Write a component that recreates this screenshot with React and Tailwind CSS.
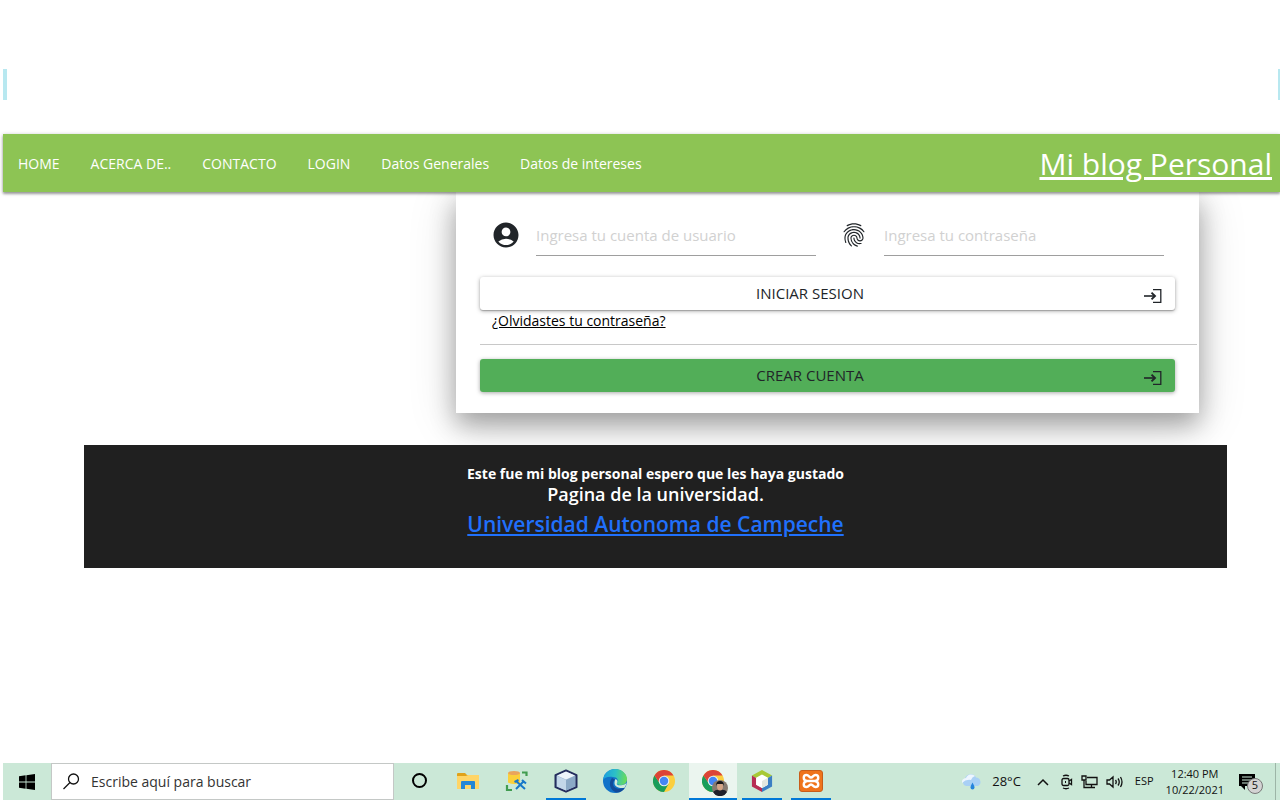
import { MdAccountCircle, MdFingerprint } from "react-icons/md";

const navLinks = [
  "HOME",
  "ACERCA DE..",
  "CONTACTO",
  "LOGIN",
  "Datos Generales",
  "Datos de intereses",
];

function EnterIcon() {
  return (
    <svg viewBox="0 0 18 14" className="mt-[5px] h-[14px] w-[18px]" fill="none" stroke="currentColor" aria-hidden="true">
      <path d="M9 0.7h7.8v12.6H9" strokeWidth="1.3" />
      <path d="M0 7h11" strokeWidth="1.6" />
      <path d="M7.5 3.6L11 7l-3.5 3.4" strokeWidth="1.9" />
    </svg>
  );
}

function Field({ id, label, type, icon }) {
  return (
    <div className="flex flex-1 items-center gap-4">
      <label htmlFor={id} aria-label={label} className="flex w-7 justify-center text-[#212529]">
        {icon}
      </label>
      <input
        id={id}
        type={type}
        placeholder={label}
        className="h-[42px] min-w-0 flex-1 border-b border-[#9e9e9e] bg-transparent text-[15px] outline-none placeholder:text-[#d1d1d1]"
      />
    </div>
  );
}

function WindowsLogo() {
  return (
    <svg viewBox="0 0 16 16" className="h-4 w-4" aria-hidden="true">
      <path d="M0 2.2L6.6 1.3v6.2H0zM7.4 1.2L16 0v7.5H7.4zM0 8.4h6.6v6.3L0 13.8zM7.4 8.4H16V16l-8.6-1.2z" />
    </svg>
  );
}

function FolderIcon() {
  return (
    <svg viewBox="0 0 22 18" className="h-[18px] w-[22px]" aria-hidden="true">
      <path d="M0 2q0-1 1-1h7l2 2h10q1 0 1 1v3H0z" fill="#e0a21a" />
      <path d="M0 4h9l2-1h11v14H0z" fill="#ffd567" />
      <path d="M4 17v-7q0-1 1-1h12q1 0 1 1v7h-4v-4H8v4z" fill="#2486d6" />
    </svg>
  );
}

function DatabaseIcon() {
  return (
    <svg viewBox="0 0 24 22" className="h-[22px] w-6" aria-hidden="true">
      <path d="M3 3v9.500q6 3 12 0V3z" fill="#fbd03b" />
      <ellipse cx="9" cy="3" rx="6" ry="2" fill="#eaa45c" />
      <path d="M17 2.500h4.500V6M2 15v5h5" fill="none" stroke="#419c50" strokeWidth="2.200" />
      <path d="M11 11l9 8M19 11l-8 8M9.500 12l4-2M17 10l4 3.500" stroke="#1877c9" strokeWidth="2" />
    </svg>
  );
}

function CubeIcon() {
  return (
    <svg viewBox="0 0 24 24" className="h-6 w-6" aria-hidden="true">
      <path d="M12 1.500l10.500 4.700v12L12 22.700 1.500 18.200v-12z" fill="#9fb9d3" stroke="#242d5d" strokeWidth="2" strokeLinejoin="round" />
      <path d="M12 2.500l9 4-9 4-9-4z" fill="#edf4fa" />
      <path d="M3 7l9 4v10.500l-9-4z" fill="#c3d7e9" />
      <path d="M21 7l-9 4v10.500l9-4z" fill="#8ba9c6" />
    </svg>
  );
}

function EdgeIcon() {
  return (
    <svg viewBox="0 0 24 24" className="h-6 w-6" aria-hidden="true">
      <defs>
        <linearGradient id="edge-top" x1="0" y1="0.4" x2="1" y2="0.5">
          <stop offset="0" stopColor="#1c9ee0" />
          <stop offset="0.5" stopColor="#2cc0c6" />
          <stop offset="1" stopColor="#6cdd57" />
        </linearGradient>
      </defs>
      <circle cx="12" cy="12" r="12" fill="#1273c9" />
      <path d="M0 11C1 4 6 0 12 0c7 0 12 5 12 10 0 4-3 6-6 6-3 0-5-1-4-2 2-3 0-6-4-6C5 7 1 9 0 11z" fill="url(#edge-top)" />
      <path d="M9 9c-4 5-2 12 4 14.500 4 .2 7-1.500 9-5-4 2-12 2-12-4 0-2 1-3 2-4z" fill="#124b9a" />
      <path d="M12.500 10c2 1 2.500 2.500 1.500 4-1 1.600 1 2.500 4 2.300 2.500 0 4.500-1 5.500-2.500-.3 2-1 3.800-2 5-5 1-10-1-10-4.500 0-2 .5-3.500 1-4.300z" fill="#d0ebdc" />
    </svg>
  );
}

function ChromeIcon() {
  return (
    <svg viewBox="0 0 24 24" className="h-[22px] w-[22px]" aria-hidden="true">
      <circle cx="12" cy="12" r="12" fill="#fbcf3e" />
      <path d="M1.600 6A12 12 0 0 0 12 24l5-9-9 0z" fill="#189d5b" />
      <path d="M12 6h10.400A12 12 0 0 0 1.600 6L7 14z" fill="#dc4437" />
      <circle cx="12" cy="12" r="5.800" fill="#e8f0ee" />
      <circle cx="12" cy="12" r="4.600" fill="#4386f5" />
    </svg>
  );
}

function ChromeProfileIcon() {
  return (
    <span className="relative flex">
      <ChromeIcon />
      <svg viewBox="0 0 16 16" className="absolute -right-1 -bottom-1 h-4 w-4" aria-hidden="true">
        <circle cx="8" cy="8" r="8" fill="#877a70" />
        <path d="M1 12q3-3 7-2 5-1 7 2a8 8 0 0 1-14 0z" fill="#20202b" />
        <ellipse cx="8" cy="6.500" rx="3" ry="4" fill="#d4a486" />
        <path d="M4 6q0-5 4-5t4 5l-1-2H5z" fill="#17171b" />
      </svg>
    </span>
  );
}

function NetBeansIcon() {
  return (
    <svg viewBox="0 0 24 24" className="h-[22px] w-[22px]" aria-hidden="true">
      <path d="M12 0l11 6-5 3-6-3.500L6 9 1 6z" fill="#a8c936" />
      <path d="M1 6l5 3v7l6 3.500V24L1 18z" fill="#b72d54" />
      <path d="M23 6l-5 3v7l-6 3.500V24l11-6z" fill="#3b7fc4" />
      <path d="M12 5l6.500 3.500v7.500L12 19.500 5.500 16V8.500z" fill="#fff" />
      <path d="M12 12l6.500-3.500V16L12 19.500z" fill="#e3e7df" />
    </svg>
  );
}

function XamppIcon() {
  return (
    <svg viewBox="0 0 24 22" className="h-[22px] w-6" aria-hidden="true">
      <rect x="0.500" y="0.500" width="23" height="21" rx="2.500" fill="#ef741c" stroke="#c85d19" />
      <path
        d="M8 11H16M8 11C3.500 10 4 5 7.500 5c2.500 0 2.500 2.500 4.500 2.500S14 5 16.500 5C20 5 20.500 10 16 11M8 11c-4.500 1-4 6-.5 6 2.500 0 2.500-2.500 4.500-2.500s2 2.500 4.500 2.500c3.500 0 4-5-.5-6"
        fill="none"
        stroke="#fff"
        strokeWidth="2.400"
      />
    </svg>
  );
}

const apps = [
  { name: "Cortana", icon: <span className="h-[15px] w-[15px] rounded-full border-2 border-black" />, state: "border-transparent" },
  { name: "Explorador de archivos", icon: <FolderIcon />, state: "border-transparent" },
  { name: "Base de datos", icon: <DatabaseIcon />, state: "border-transparent" },
  { name: "NetBeans", icon: <CubeIcon />, state: "border-[#0078d7]" },
  { name: "Edge", icon: <EdgeIcon />, state: "border-transparent" },
  { name: "Chrome", icon: <ChromeIcon />, state: "border-transparent" },
  { name: "Chrome, perfil", icon: <ChromeProfileIcon />, state: "border-[#0078d7]", active: true },
  { name: "Apache NetBeans", icon: <NetBeansIcon />, state: "border-[#0078d7]" },
  { name: "XAMPP", icon: <XamppIcon />, state: "border-[#0078d7]" },
];

function TrayIcons() {
  return (
    <div className="flex items-center gap-2">
      <svg viewBox="0 0 12 8" className="h-2 w-3" fill="none" stroke="#111" strokeWidth="1.500" aria-hidden="true">
        <path d="M1 7l5-5 5 5" />
      </svg>
      <svg viewBox="0 0 12 16" className="ml-1 h-4 w-3" fill="none" stroke="#111" strokeWidth="1.300" aria-hidden="true">
        <rect x="1" y="4.500" width="7" height="7" rx="1.500" />
        <path d="M8 7l2.500-1.500v5L8 9M2 2q3-1.500 6 0M2 14q3 1.500 6 0" />
        <path d="M4 8h1" strokeWidth="2" />
      </svg>
      <svg viewBox="0 0 17 14" className="h-[14px] w-[17px]" fill="none" stroke="#111" strokeWidth="1.300" aria-hidden="true">
        <path d="M6 2.500h10v7H5V6M10.500 9.500V12M7 12.500h7" />
        <path d="M1 1h4v4H1zM3 5v7.500h4" />
      </svg>
      <svg viewBox="0 0 17 14" className="h-[14px] w-[17px]" fill="none" stroke="#111" strokeWidth="1.300" aria-hidden="true">
        <path d="M1 5h2.500L7 2v10L3.500 9H1zM9.500 5q1.500 2 0 4M12 3.500q2.500 3.500 0 7M14.500 2q3 5 0 10" />
      </svg>
    </div>
  );
}

function Taskbar() {
  return (
    <footer className="flex h-[37px] items-stretch bg-[#cbe8d7] text-[#111]">
      <button type="button" aria-label="Inicio" className="flex w-12 items-center justify-center">
        <WindowsLogo />
      </button>
      <label className="flex w-[343px] items-center gap-[11px] border border-[#c4c8c6] bg-white px-[11px]">
        <svg viewBox="0 0 17 17" className="h-[17px] w-[17px]" fill="none" stroke="#111" strokeWidth="1.300" aria-hidden="true">
          <circle cx="10.500" cy="6" r="5" />
          <path d="M7 9.500L0.500 16" />
        </svg>
        <input
          type="text"
          aria-label="Buscar"
          placeholder="Escribe aquí para buscar"
          className="min-w-0 flex-1 bg-transparent text-[14px] outline-none placeholder:text-[#333]"
        />
      </label>
      <div className="ml-px flex">
        {apps.map((app) => (
          <button
            key={app.name}
            type="button"
            aria-label={app.name}
            className={"flex w-[49px] justify-center " + (app.active ? "pr-px" : "pr-[5px] pl-1")}
          >
            <span
              className={
                "flex h-full w-full items-center justify-center border-b-2 " +
                app.state +
                (app.active ? " bg-[#ebf5ef]" : "")
              }
            >
              {app.icon}
            </span>
          </button>
        ))}
      </div>
      <div className="ml-auto flex items-center">
        <svg viewBox="0 0 20 16" className="h-4 w-5" aria-hidden="true">
          <path d="M4 12a4 4 0 0 1-1-7.500 6 6 0 0 1 11-1 4.500 4.500 0 0 1 2 8.500z" fill="#a9d0f5" />
          <path d="M0 9a4 4 0 0 1 4-5 5.500 5.500 0 0 1 9-2q-3 1-4 4-5-1-9 3z" fill="#edf5ff" />
          <path d="M10.500 8.500q2 3.500 2 5a2 2 0 0 1-4 0Q8.500 12 10.500 8.500z" fill="#2584dc" />
        </svg>
        <span className="mr-4 ml-[10px] text-[13px]">28°C</span>
        <TrayIcons />
        <span className="ml-3 text-[11px]">ESP</span>
        <div className="ml-3 text-center text-[11px] leading-4">
          <div>12:40 PM</div>
          <div>10/22/2021</div>
        </div>
        <button type="button" aria-label="Notificaciones" className="relative mr-3 ml-[15px] flex h-6 w-6">
          <svg viewBox="0 0 16 16" className="mt-1 h-4 w-4" aria-hidden="true">
            <path d="M0 0h16v12H6v4l-4-4H0z" />
            <path d="M3 3h10M3 6h10M3 9h7" stroke="#cbe8d7" strokeWidth="1.200" />
          </svg>
          <span className="absolute right-0 bottom-0 flex h-4 w-4 items-center justify-center rounded-full border border-[#777] bg-[#d3d3d3] text-[11px]">
            5
          </span>
        </button>
        <span className="mr-1 h-full border-l border-[#9db5a7]" />
      </div>
    </footer>
  );
}

export default function App() {
  return (
    <div className="flex min-h-screen flex-col bg-white pl-[3px] font-['Open_Sans','Noto_Sans',sans-serif] text-[#212529]">
      <div className="mt-[69px] flex h-[31px] justify-between" aria-hidden="true">
        <span className="w-1 bg-[#b8e8f0]" />
        <span className="w-[2px] bg-[#b8e8f0]" />
      </div>
      <nav className="relative z-10 mt-[34px] flex h-[58px] items-center justify-between bg-[#8dc454] pr-2 pl-[15px] text-white shadow-[0_2px_2px_0_rgba(0,0,0,0.24),0_1px_4px_0_rgba(0,0,0,0.3)]">
        <ul className="flex gap-[31px] text-[14px]">
          {navLinks.map((text) => (
            <li key={text}>
              <a href="#">{text}</a>
            </li>
          ))}
        </ul>
        <a href="#" className="text-[30px] underline">
          Mi blog Personal
        </a>
      </nav>

      <main className="flex flex-1 flex-col pr-[53px] pl-[81px]">
        <section className="mr-7 ml-[372px] h-[221px] bg-white px-6 shadow-[0_12px_24px_0_rgba(0,0,0,0.3),0_8px_46px_0_rgba(0,0,0,0.16)]">
          <form>
            <div className="flex gap-6 pt-[22px] pr-[11px] pl-3">
              <Field id="user" label="Ingresa tu cuenta de usuario" type="text" icon={<MdAccountCircle className="h-[30px] w-[30px] shrink-0" />} />
              <Field id="password" label="Ingresa tu contraseña" type="password" icon={<MdFingerprint className="h-7 w-7 shrink-0" />} />
            </div>
            <button
              type="button"
              className="mt-[21px] flex h-[33px] w-full items-center gap-1 rounded-[3px] bg-white pr-[13px] text-[15px] shadow-[0_1px_4px_0_rgba(0,0,0,0.35),0_1px_1px_0_rgba(0,0,0,0.2)]"
            >
              <span className="flex-1">INICIAR SESION</span>
              <EnterIcon />
            </button>
            <a href="#" className="ml-3 block w-fit text-[14px] leading-[22px] text-black underline">
              ¿Olvidastes tu contraseña?
            </a>
            <hr className="mt-3 -mr-[22px] border-[#c8c8c8]" />
            <button
              type="button"
              className="mt-[14px] flex h-[33px] w-full items-center gap-1 rounded-[3px] bg-[#52ae58] pr-[13px] text-[15px] shadow-[0_1px_4px_0_rgba(0,0,0,0.35)]"
            >
              <span className="flex-1">CREAR CUENTA</span>
              <EnterIcon />
            </button>
          </form>
        </section>
        <section className="relative mt-8 flex h-[123px] flex-col items-center bg-[#202020] pt-[19px] text-white">
          <p className="text-[14px] leading-5 font-bold">Este fue mi blog personal espero que les haya gustado</p>
          <p className="text-[18px] leading-5 font-semibold">Pagina de la universidad.</p>
          <a href="#" className="mt-1 text-[21px] leading-8 font-semibold text-[#2070fb] underline">
            Universidad Autonoma de Campeche
          </a>
        </section>
      </main>
      <Taskbar />
    </div>
  );
}
